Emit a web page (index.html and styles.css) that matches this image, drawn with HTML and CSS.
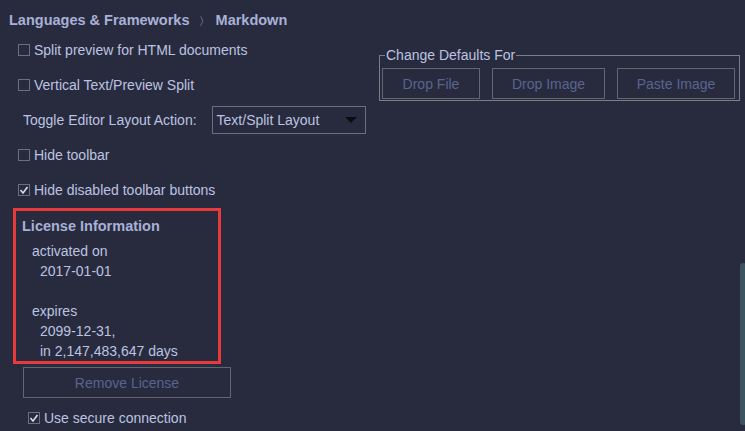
FILE: index.html
```html
<!DOCTYPE html>
<html>
<head>
<meta charset="utf-8">
<link rel="stylesheet" href="styles.css">
</head>
<body>
<div class="header">Languages &amp; Frameworks <span class="sep">〉</span> Markdown</div>
<div class="main">
  <div class="left">
    <div class="row"><span class="cb"></span><span>Split preview for HTML documents</span></div>
    <div class="row"><span class="cb"></span><span>Vertical Text/Preview Split</span></div>
    <div class="row toggle">
      <span class="label">Toggle Editor Layout Action:</span>
      <div class="combo"><span>Text/Split Layout</span><span class="arrow"></span></div>
    </div>
    <div class="row"><span class="cb"></span><span>Hide toolbar</span></div>
    <div class="row"><span class="cb checked"><svg width="10" height="10" viewBox="0 0 10 10"><path d="M1.5 5 L4 8 L8.5 2" fill="none" stroke="#d8dcea" stroke-width="1.6"/></svg></span><span>Hide disabled toolbar buttons</span></div>
    <div class="license">
      <div class="lic-title">License Information</div>
      <div class="l1">activated on</div>
      <div class="l2">2017-01-01</div>
      <div class="l1 blank">&nbsp;</div>
      <div class="l1">expires</div>
      <div class="l2">2099-12-31,</div>
      <div class="l2">in 2,147,483,647 days</div>
    </div>
    <div class="btn remove">Remove License</div>
    <div class="row secure"><span class="cb checked"><svg width="10" height="10" viewBox="0 0 10 10"><path d="M1.5 5 L4 8 L8.5 2" fill="none" stroke="#d8dcea" stroke-width="1.6"/></svg></span><span>Use secure connection</span></div>
  </div>
  <fieldset class="defaults">
    <legend>Change Defaults For</legend>
    <div class="btns">
      <div class="btn b1">Drop File</div>
      <div class="btn b2">Drop Image</div>
      <div class="btn b3">Paste Image</div>
    </div>
  </fieldset>
</div>
<div class="scrollbar"></div>
</body>
</html>
```
FILE: styles.css
```css
html, body {
  margin: 0;
  padding: 0;
  background: #282b3d;
  height: 100%;
  overflow: hidden;
}
body {
  font-family: "Liberation Sans", Arial, sans-serif;
  font-size: 14px;
  color: #bcc3e2;
  position: relative;
}
.header {
  font-weight: bold;
  font-size: 14.5px;
  color: #a8b1d8;
  padding: 12px 0 0 9px;
  height: 20px;
  line-height: 17px;
}
.sep {
  font-weight: normal;
  font-size: 11px;
  margin: 0 2px 0 5px;
}
.main {
  display: flex;
  align-items: flex-start;
}
.left {
  width: 379px;
  display: flex;
  flex-direction: column;
}
.row {
  height: 35px;
  display: flex;
  align-items: center;
  padding-left: 18px;
  gap: 4px;
}
.cb {
  width: 10px;
  height: 10px;
  border: 1px solid #6c6f7a;
  display: inline-flex;
  align-items: center;
  justify-content: center;
}
.toggle {
  padding-left: 23px;
  gap: 15px;
}
.combo {
  width: 140px;
  height: 26px;
  border: 1px solid #6c6f7a;
  display: flex;
  align-items: center;
  justify-content: space-between;
  padding: 0 8px 0 4px;
}
.arrow {
  width: 0;
  height: 0;
  border-left: 6px solid transparent;
  border-right: 6px solid transparent;
  border-top: 6px solid #0c0d12;
}
.license {
  margin: 1px 0 0 13px;
  width: 196px;
  border: 3px solid #e8393b;
  padding: 5px 0 0 6px;
  line-height: 20px;
}
.lic-title {
  font-weight: bold;
  font-size: 14.5px;
  color: #a8b1d8;
  margin-bottom: 5px;
}
.l1 { padding-left: 10px; }
.l2 { padding-left: 18px; }
.btn {
  border: 1px solid #63666f;
  color: #5a6490;
  display: flex;
  align-items: center;
  justify-content: center;
  box-sizing: border-box;
}
.remove {
  margin: 3px 0 0 23px;
  width: 208px;
  height: 31px;
}
.row.secure {
  padding-left: 28px;
  height: 40px;
}
.defaults {
  margin: 16px 0 0 0;
  padding: 6px 2px 1px 2px;
  border: 1px solid #7a7d88;
  width: 355px;
  min-width: 0;
}
.defaults legend {
  padding: 0 1px;
  margin-left: 3px;
  line-height: 14px;
}
.btns {
  display: flex;
  gap: 12px;
}
.btns .btn { height: 31px; }
.b1 { width: 98px; }
.b2 { width: 113px; }
.b3 { width: 118px; }
.scrollbar {
  position: absolute;
  left: 740px;
  top: 263px;
  width: 6px;
  height: 162px;
  background: #3c5460;
  border-radius: 3px;
}
```
